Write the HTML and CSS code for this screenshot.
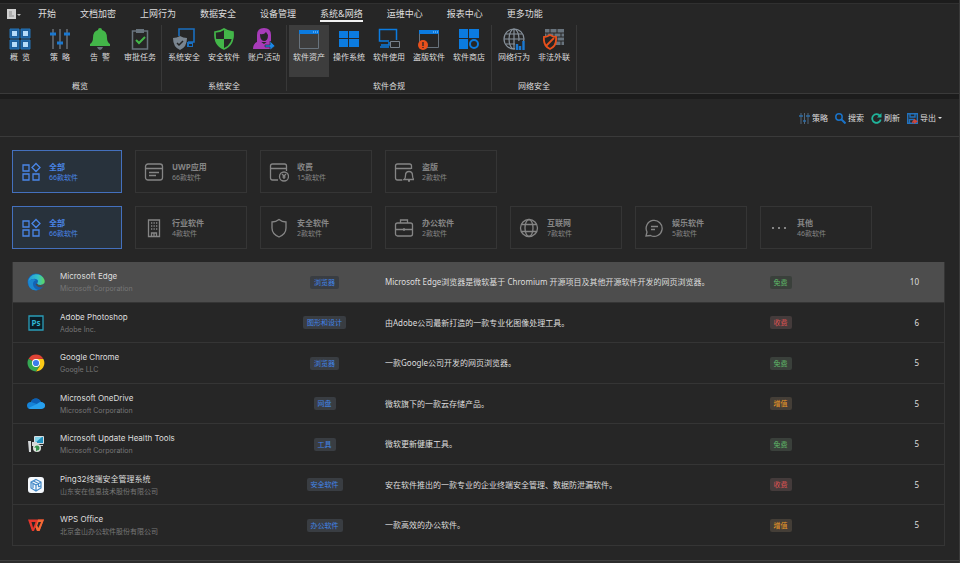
FILE: index.html
```html
<!DOCTYPE html>
<html lang="zh-CN">
<head>
    <meta charset="UTF-8">
    <meta name="viewport" content="width=device-width, initial-scale=1.0">
    <title>软件资产</title>
    <link rel="stylesheet" href="styles.css">
</head>
<body>

<header>
    <nav class="tabs">
        <button class="app-menu" aria-label="菜单">
            <svg width="14" height="10" viewBox="0 0 14 10"><path d="M0 0h9v10H0z" fill="#d0d0d0"/><path d="M2 3h3M2 5h3M2 7h5" stroke="#8a8a8a"/><path d="M10 5h4l-2 2z" fill="#bbb"/></svg>
        </button>
        <a href="#">开始</a>
        <a href="#">文档加密</a>
        <a href="#">上网行为</a>
        <a href="#">数据安全</a>
        <a href="#">设备管理</a>
        <a href="#" class="active">系统&amp;网络</a>
        <a href="#">运维中心</a>
        <a href="#">报表中心</a>
        <a href="#">更多功能</a>
    </nav>

    <div class="ribbon">
        <section class="group">
            <div class="group-buttons">
                <button>
                    <svg viewBox="0 0 22 22"><path d="M1 1h9v9H1zM12 1h9v9h-9zM1 12h9v9H1zM12 12h9v9h-9z" fill="#1d5f9c" stroke="#2474b8"/><path d="M3 3h5v5H3zM14 3h5v5h-5zM3 14h5v5H3zM14 14h5v5h-5z" fill="#b5dcfa"/></svg>
                    概&nbsp;&nbsp;览
                </button>
                <button>
                    <svg viewBox="0 0 22 22"><path d="M4 1v20M11 1v20M18 1v20" stroke="#697078" stroke-width="1.5"/><path d="M1 6h6M8 15h6M15 6h6" stroke="#1a78d0" stroke-width="3"/></svg>
                    策&nbsp;&nbsp;略
                </button>
                <button>
                    <svg viewBox="0 0 22 22"><path d="M8 19h6q-1 3-3 3t-3-3z" fill="#68737d"/><path d="M11 0q2 0 2 2 5 1 5 8 0 4 3 6v2H1v-2q3-2 3-6 0-7 5-8 0-2 2-2z" fill="#43b649"/></svg>
                    告&nbsp;&nbsp;警
                </button>
                <button>
                    <svg viewBox="0 0 22 22"><path d="M3.500 3h15v18h-15z" fill="none" stroke="#68737d" stroke-width="1.500"/><path d="M7 1h8v4H7z" fill="#68737d"/><path d="M7 12l3 3 6-6" fill="none" stroke="#43b649" stroke-width="2"/></svg>
                    审批任务
                </button>
            </div>
            <h2>概览</h2>
        </section>

        <section class="group">
            <div class="group-buttons">
                <button>
                    <svg viewBox="0 0 22 22"><path d="M6 8V1h15v13h-6" fill="none" stroke="#1a6fc0" stroke-width="1.6"/><path d="M14 14h6v5h-6z" fill="#1a6fc0"/><path d="M16 16h3v2h-3z" fill="#262626"/><path d="M7 8q3 2 7 2 0 9-7 12-7-3-7-12 4 0 7-2z" fill="#7a8590"/><path d="M4 15l2 2 4-4" fill="none" stroke="#262626" stroke-width="1.5"/></svg>
                    系统安全
                </button>
                <button>
                    <svg viewBox="0 0 22 22"><path d="M11 1q4 3 9 3 1 13-9 17Q1 17 2 4q5 0 9-3z" fill="#262626" stroke="#43b649" stroke-width="1.6"/><path d="M11 2v9h9q1-3 0-7-5 0-9-2zM11 11H2q2 8 9 10z" fill="#43b649"/></svg>
                    安全软件
                </button>
                <button>
                    <svg viewBox="0 0 22 22"><path d="M4 14V7q0-7 7-7t7 7v7z" fill="#a73bb8"/><path d="M7 6q4 1 6-2l2 3q0 6-4 6t-4-7z" fill="#262626"/><path d="M0 21q0-7 7-8l4 3 4-3q3 1 4 3v5z" fill="#a73bb8"/><path d="M12 17h5v-4l5 5-5 4v-3h-5z" fill="#1a88e8" stroke="#262626" stroke-width=".6"/></svg>
                    账户活动
                </button>
            </div>
            <h2>系统安全</h2>
        </section>

        <section class="group">
            <div class="group-buttons">
                <button class="active">
                    <svg viewBox="0 0 22 22"><path d="M1.500 2.500h19v18h-19z" fill="none" stroke="#68737d"/><path d="M1 2h20v4H1z" fill="#0b7be0"/><path d="M15 4h1M17 4h1M19 4h1" stroke="#a9d4ff"/></svg>
                    软件资产
                </button>
                <button>
                    <svg viewBox="0 0 22 22"><path d="M1 3h9v7H1zM11 3h10v7H11zM1 11h9v8H1zM11 11h10v8H11z" fill="#0b7be0"/></svg>
                    操作系统
                </button>
                <button>
                    <svg viewBox="0 0 22 22"><path d="M11 13H1.500V1.500h17V12M3 17h8v-3M2 19h9" fill="none" stroke="#0b7be0" stroke-width="1.500"/><path d="M12.500 13.500h9v6h-9z" fill="none" stroke="#78828c"/></svg>
                    软件使用
                </button>
                <button>
                    <svg viewBox="0 0 22 22"><path d="M1.500 2.500h19v17h-19z" fill="none" stroke="#68737d"/><path d="M1 2h20v4H1z" fill="#0b7be0"/><path d="M15 4h1M17 4h1M19 4h1" stroke="#a9d4ff"/><circle cx="5" cy="17" r="5" fill="#e8501c"/><path d="M5 14v4M5 19v1" stroke="#262626" stroke-width="1.300"/></svg>
                    盗版软件
                </button>
                <button>
                    <svg viewBox="0 0 22 22"><path d="M1 1h9v9H1zM11 1h10v9H11zM1 11h9v10H1z" fill="#0b7be0"/><circle cx="16" cy="16" r="4" fill="none" stroke="#0b7be0" stroke-width="2"/></svg>
                    软件商店
                </button>
            </div>
            <h2>软件合规</h2>
        </section>

        <section class="group">
            <div class="group-buttons">
                <button>
                    <svg viewBox="0 0 22 22"><g fill="none" stroke="#87919b" stroke-width="1.200"><circle cx="11" cy="11" r="10"/><ellipse cx="11" cy="11" rx="5" ry="10"/><path d="M11 1v20M1 11h20M3 6h16M3 16h16"/></g><path d="M12 13h10v9H12z" fill="#262626"/><path d="M14 22v-6M17 22v-4M20.500 22v-9" stroke="#1a78d0" stroke-width="2.400"/></svg>
                    网络行为
                </button>
                <button>
                    <svg viewBox="0 0 22 22"><path d="M2 1h19v16H2z" fill="#68737d"/><path d="M2 5h19M2 9h19M2 13h19M7 1v4M14 1v4M4 5v4M11 5v4M18 5v4M7 9v4M14 9v4M18 13v4" stroke="#262626"/><path d="M7 7q3 2 6 2 1 9-6 12-7-3-6-12 3 0 6-2z" fill="#262626" stroke="#e8501c" stroke-width="1.800"/><path d="M3 18l8-8" stroke="#e8501c" stroke-width="1.800"/></svg>
                    非法外联
                </button>
            </div>
            <h2>网络安全</h2>
        </section>
    </div>
</header>

<div class="toolbar">
    <button>
        <svg viewBox="0 0 11 11"><path d="M2 0v11M5.500 0v11M9 0v11" stroke="#53677a"/><path d="M0 3h4M4 8h3M7 3h4" stroke="#2d6ea8" stroke-width="1.500"/></svg>
        策略
    </button>
    <button>
        <svg viewBox="0 0 11 11"><circle cx="4" cy="4" r="3.200" fill="none" stroke="#1a73c8" stroke-width="1.500"/><path d="M6.500 6.500l4 4" stroke="#1a73c8" stroke-width="2"/></svg>
        搜索
    </button>
    <button>
        <svg viewBox="0 0 11 11"><path d="M9 3a4.300 4.300 0 1 0 .7 3.500" fill="none" stroke="#20b59c" stroke-width="1.800"/><path d="M10.500 0v4.500H6z" fill="#20b59c"/></svg>
        刷新
    </button>
    <button>
        <svg viewBox="0 0 11 11"><path d="M.7.700h9.600v9.600H.7zM3 1v3h5V1M2.500 10V6.500H7" fill="none" stroke="#2372bd" stroke-width="1.400"/><path d="M5 11q0-4 2-4V5.500l4 3-4 2.500V9.500Q6 9 5 11z" fill="#c9473f"/></svg>
        导出<i class="caret"></i>
    </button>
</div>

<main>
    <div class="filters">
        <button class="active">
            <svg viewBox="0 0 20 20"><path d="M2 3h6v6H2zM2 12h6v6H2zM12 12h6v6h-6zM15 1.500L19 5.500 15 9.500 11 5.500z"/></svg>
            <span><b>全部</b>66款软件</span>
        </button>
        <button>
            <svg viewBox="0 0 20 20"><rect x="1.500" y="2" width="17" height="16" rx="2.500"/><path d="M2 6.500h16M5 10.500h10M5 13.500h7"/></svg>
            <span><b>UWP应用</b>66款软件</span>
        </button>
        <button>
            <svg viewBox="0 0 20 20"><path d="M9 18H3.500q-2 0-2-2V4q0-2 2-2h12q2 0 2 2v5M2 6.500h15"/><circle cx="15" cy="14.500" r="4.500"/><path d="M13 12l2 2 2-2M15 14v3M13.500 15h3"/></svg>
            <span><b>收费</b>15款软件</span>
        </button>
        <button>
            <svg viewBox="0 0 20 20"><path d="M8 18H3.500q-2 0-2-2V4q0-2 2-2h12q2 0 2 2v3M2 6.500h15"/><path d="M10 17.500q1.500-1 1.500-4 0-4 3.500-4t3.500 4q0 3 1.500 4zM14 19h2"/></svg>
            <span><b>盗版</b>2款软件</span>
        </button>
    </div>

    <div class="filters">
        <button class="active">
            <svg viewBox="0 0 20 20"><path d="M2 3h6v6H2zM2 12h6v6H2zM12 12h6v6h-6zM15 1.500L19 5.500 15 9.500 11 5.500z"/></svg>
            <span><b>全部</b>66款软件</span>
        </button>
        <button>
            <svg viewBox="0 0 20 20"><path d="M4.500 2h11v16.500h-11zM7.500 18v-3h5v3M10 15v3"/><path d="M7 5h7M7 8h7M7 11h7" stroke-dasharray="1.300 1.200"/></svg>
            <span><b>行业软件</b>4款软件</span>
        </button>
        <button>
            <svg viewBox="0 0 20 20"><path d="M10 1.500q3 2.500 7 2.500v6q0 6-7 9-7-3-7-9V4q4 0 7-2.500z"/></svg>
            <span><b>安全软件</b>2款软件</span>
        </button>
        <button>
            <svg viewBox="0 0 20 20"><rect x="1.500" y="5" width="17" height="13" rx="2"/><path d="M6.500 5V2h7v3M2 11.500h16M10 10v3"/></svg>
            <span><b>办公软件</b>2款软件</span>
        </button>
        <button>
            <svg viewBox="0 0 20 20"><circle cx="10" cy="10" r="8.500"/><ellipse cx="10" cy="10" rx="4" ry="8.500"/><path d="M2.500 6.500h15M2.500 13.500h15"/></svg>
            <span><b>互联网</b>7款软件</span>
        </button>
        <button>
            <svg viewBox="0 0 20 20"><path d="M2 18l1-4a8 8 0 1 1 3.500 3.500zM7 8.500h7M7 11.500h4"/></svg>
            <span><b>娱乐软件</b>5款软件</span>
        </button>
        <button>
            <svg viewBox="0 0 20 20"><path d="M3 10h2M9 10h2M15 10h2" stroke-width="2"/></svg>
            <span><b>其他</b>46款软件</span>
        </button>
    </div>

    <table class="software">
        <colgroup>
            <col class="col-icon"><col class="col-name"><col class="col-tag"><col><col class="col-tag"><col class="col-count">
        </colgroup>
        <tbody>
            <tr class="selected">
                <td class="icon"><svg viewBox="0 0 18 18"><defs><linearGradient id="edge" x1="0" x2="1"><stop offset="0" stop-color="#2399dc"/><stop offset=".6" stop-color="#35c1c8"/><stop offset="1" stop-color="#62d957"/></linearGradient></defs><circle cx="9" cy="9" r="8.500" fill="#1462b5"/><path d="M1 9a8.500 8.500 0 0 1 16.500-2q1 5-4 5-3 0-3.500-1.500Q12 8 10 6.500 6 4 1 9z" fill="url(#edge)"/><path d="M1 9q4-5 8-2-3 1-3 4 0 4 5 6Q2 19 1 9z" fill="#1b87cf"/><path d="M10 10.500q.5 1.500 3.500 1.500 2.500 0 4-2-.5 3-3 4.500-4 0-6-3z" fill="#4d4d4d"/></svg></td>
                <td><div class="name">Microsoft Edge</div><div class="vendor">Microsoft Corporation</div></td>
                <td class="center"><span class="tag">浏览器</span></td>
                <td>Microsoft Edge浏览器是微软基于 Chromium 开源项目及其他开源软件开发的网页浏览器。</td>
                <td class="center"><span class="tag free">免费</span></td>
                <td class="count">10</td>
            </tr>
            <tr>
                <td class="icon"><svg viewBox="0 0 18 18"><path d="M2 2h14v14H2z" fill="#0a1c26" stroke="#2a9db8" stroke-width="1.300"/><text x="9" y="12" class="ps">Ps</text></svg></td>
                <td><div class="name">Adobe Photoshop</div><div class="vendor">Adobe Inc.</div></td>
                <td class="center"><span class="tag">图形和设计</span></td>
                <td>由Adobe公司最新打造的一款专业化图像处理工具。</td>
                <td class="center"><span class="tag paid">收费</span></td>
                <td class="count">6</td>
            </tr>
            <tr>
                <td class="icon"><svg viewBox="0 0 18 18"><path d="M9 9L1.600 4.800A8.500 8.500 0 0 1 16.400 4.800L9 5z" fill="#e04335"/><path d="M9 9L1.600 4.800A8.500 8.500 0 0 0 9 17.500l4-6.500z" fill="#35a853"/><path d="M9 5h7.400A8.500 8.500 0 0 1 9 17.500l4-6z" fill="#fbc916"/><circle cx="9" cy="9" r="4" fill="#fff"/><circle cx="9" cy="9" r="3.100" fill="#3b7ded"/></svg></td>
                <td><div class="name">Google Chrome</div><div class="vendor">Google LLC</div></td>
                <td class="center"><span class="tag">浏览器</span></td>
                <td>一款Google公司开发的网页浏览器。</td>
                <td class="center"><span class="tag free">免费</span></td>
                <td class="count">5</td>
            </tr>
            <tr>
                <td class="icon"><svg viewBox="0 0 18 18"><path d="M4 14q-4 0-4-3.500T4 7q1-3.500 5-3.500 3.500 0 5 3.500 4 .5 4 3.500T14 14z" fill="#1583d8"/><path d="M4 7q1-3.500 5-3.500 3.500 0 5 3.500l-4 2z" fill="#0c5fb4"/><path d="M1.500 13L10 9q2-2 4-2 4 .5 4 3.500T14 14H4q-1.500 0-2.500-1z" fill="#27a0ee"/></svg></td>
                <td><div class="name">Microsoft OneDrive</div><div class="vendor">Microsoft Corporation</div></td>
                <td class="center"><span class="tag">网盘</span></td>
                <td>微软旗下的一款云存储产品。</td>
                <td class="center"><span class="tag extra">增值</span></td>
                <td class="count">5</td>
            </tr>
            <tr>
                <td class="icon"><svg viewBox="0 0 18 18"><path d="M7.500 1.500h9v7h-9z" fill="#2190bd" stroke="#d7dde0"/><path d="M8 8l7-6H8z" fill="#83d5eb"/><path d="M10 10h6v1h-6z" fill="#c7cdd0"/><path d="M1 6h3v11H2zM5 7h5v4H5z" fill="#d3d6d8"/><circle cx="10" cy="13" r="4" fill="#dce2dc"/><path d="M7.500 13a2.500 2.500 0 1 1 2.500 2.500l-1 1v-4z" fill="#35914b"/></svg></td>
                <td><div class="name">Microsoft Update Health Tools</div><div class="vendor">Microsoft Corporation</div></td>
                <td class="center"><span class="tag">工具</span></td>
                <td>微软更新健康工具。</td>
                <td class="center"><span class="tag free">免费</span></td>
                <td class="count">5</td>
            </tr>
            <tr>
                <td class="icon"><svg viewBox="0 0 18 18"><rect x="1" y="1" width="16" height="16" rx="3" fill="#f4f8fc"/><path d="M9 3.500l5 2.500v6l-5 3-5-3V6zM4.500 6.500L9 9l4.500-2.500M9 9v5.500M6.500 5l5 2.500v3M6 8v4M11.500 11l2-1" fill="none" stroke="#4389c7" stroke-width="1.200"/></svg></td>
                <td><div class="name">Ping32终端安全管理系统</div><div class="vendor">山东安在信息技术股份有限公司</div></td>
                <td class="center"><span class="tag">安全软件</span></td>
                <td>安在软件推出的一款专业的企业终端安全管理、数据防泄漏软件。</td>
                <td class="center"><span class="tag paid">收费</span></td>
                <td class="count">5</td>
            </tr>
            <tr>
                <td class="icon"><svg viewBox="0 0 18 18"><path d="M1 3.500h16L12.500 15H10L8.500 11 7 15H5z" fill="#e4352b"/><path d="M4.500 6h4L6.200 12z" fill="#262626"/><path d="M11 3.500h6L12.500 15H10L8.600 11.200z" fill="#f26a35"/><path d="M11.500 6h2.500l-2.700 6-1-2.500z" fill="#262626"/></svg></td>
                <td><div class="name">WPS Office</div><div class="vendor">北京金山办公软件股份有限公司</div></td>
                <td class="center"><span class="tag">办公软件</span></td>
                <td>一款高效的办公软件。</td>
                <td class="center"><span class="tag extra">增值</span></td>
                <td class="count">5</td>
            </tr>
        </tbody>
    </table>
</main>

<footer></footer>

</body>
</html>
```

FILE: styles.css
```css
* {
    box-sizing: border-box;
}

body {
    margin: 0;
    min-height: 100vh;
    display: flex;
    flex-direction: column;
    border-right: 1px solid #3a3a3a;
    background: #262626;
    color: #dedede;
    font-family: "Noto Sans", "Noto Sans CJK SC", sans-serif;
    font-size: 8px;
    line-height: 12px;
}

button {
    margin: 0;
    padding: 0;
    border: 0;
    background: none;
    color: inherit;
    font: inherit;
    cursor: pointer;
}

svg {
    display: block;
    flex: none;
}

/* top tabs */
header {
    border-top: 3px solid #1c1c1c;
    border-bottom: 1px solid #3a3a3a;
}

.tabs {
    display: flex;
    align-items: flex-start;
    height: 22px;
    padding-top: 3px;
    border-top: 1px solid #303030;
}

.tabs .app-menu {
    width: 26px;
    padding: 2px 0 0 7px;
}

.tabs a {
    margin: 0 12px;
    font-size: 9px;
    line-height: 13px;
    color: #dedede;
    text-decoration: none;
    border-bottom: 2px solid transparent;
}

.tabs a.active {
    border-color: #f0f0f0;
}

/* ribbon */
.ribbon {
    display: flex;
    padding-bottom: 2px;
}

.group {
    padding: 0 2px;
    border-right: 1px solid #383838;
}

.group:first-child {
    padding: 0 1px 0 0;
}

.group-buttons {
    display: flex;
}

.group button {
    display: flex;
    flex-direction: column;
    align-items: center;
    width: 40px;
    height: 52px;
    padding-top: 3px;
    white-space: nowrap;
}

.group button svg {
    width: 22px;
    height: 22px;
    margin-bottom: 1px;
}

.group button:hover,
.group button.active {
    background: #3d3d3d;
}

.group h2 {
    margin: 4px 0 0;
    font-size: 8px;
    font-weight: normal;
    line-height: 10px;
    text-align: center;
}

/* page toolbar */
.toolbar {
    display: flex;
    justify-content: flex-end;
    gap: 7px;
    padding: 13px 17px 12px;
    border-top: 5px solid #1c1c1c;
    border-bottom: 1px solid #3a3a3a;
}

.toolbar button {
    display: flex;
    align-items: center;
    gap: 2px;
}

.toolbar svg {
    width: 11px;
    height: 11px;
}

.caret {
    border: 2px solid transparent;
    border-top-color: #dedede;
    border-bottom: 0;
}

/* software filters */
main {
    flex: 1;
    padding: 13px 14px 13px 12px;
}

.filters {
    display: grid;
    grid-template-columns: minmax(0, 110px) repeat(6, minmax(0, 112px));
    gap: 13px;
    margin-bottom: 13px;
}

.filters button {
    display: flex;
    align-items: center;
    gap: 8px;
    height: 43px;
    padding: 0 8px;
    border: 1px solid #353535;
    color: #858585;
    font-size: 7px;
    line-height: 11px;
    text-align: left;
    white-space: nowrap;
}

.filters button.active {
    border-color: #4470bd;
    background: #28323c;
    color: #4a86e8;
}

.filters svg {
    width: 20px;
    height: 20px;
    fill: none;
    stroke: currentColor;
    stroke-width: 1.3;
}

.filters b {
    display: block;
    font-size: 8px;
}

/* software list */
.software {
    width: 100%;
    table-layout: fixed;
    border-collapse: separate;
    border-spacing: 0;
    border: 1px solid #353535;
    border-width: 0 1px;
}

.col-icon {
    width: 47px;
}

.col-name {
    width: 204px;
}

.col-tag {
    width: 121px;
}

.col-count {
    width: 103px;
}

.software td {
    height: 41px;
    padding: 0;
    border-bottom: 1px solid #353535;
}

.software tr:nth-child(even) td {
    height: 40px;
}

.software .selected td {
    background: #4d4d4d;
}

.software svg {
    width: 18px;
    height: 18px;
    margin: 0 14px;
}

.software .ps {
    fill: #2fb4d2;
    font-size: 8px;
    font-weight: bold;
    text-anchor: middle;
}

.software .center {
    text-align: center;
}

.software .count {
    padding-right: 25px;
    text-align: right;
}

.name,
.vendor {
    font-family: Inter, "Noto Sans CJK SC", sans-serif;
}

.name {
    line-height: 14px;
}

.vendor {
    color: #777;
    font-size: 7px;
}

.tag {
    display: inline-block;
    padding: 0 4px;
    border-radius: 2px;
    background: #393d42;
    color: #4285e8;
    font-size: 7px;
    line-height: 13px;
}

.tag.free {
    background: #3a403b;
    color: #5fb868;
}

.tag.paid {
    background: #443b3b;
    color: #df5454;
}

.tag.extra {
    background: #443e37;
    color: #eb9a28;
}

footer {
    height: 3px;
    border-top: 1px solid #3f3f3f;
    background: #2c2c2c;
}
```
